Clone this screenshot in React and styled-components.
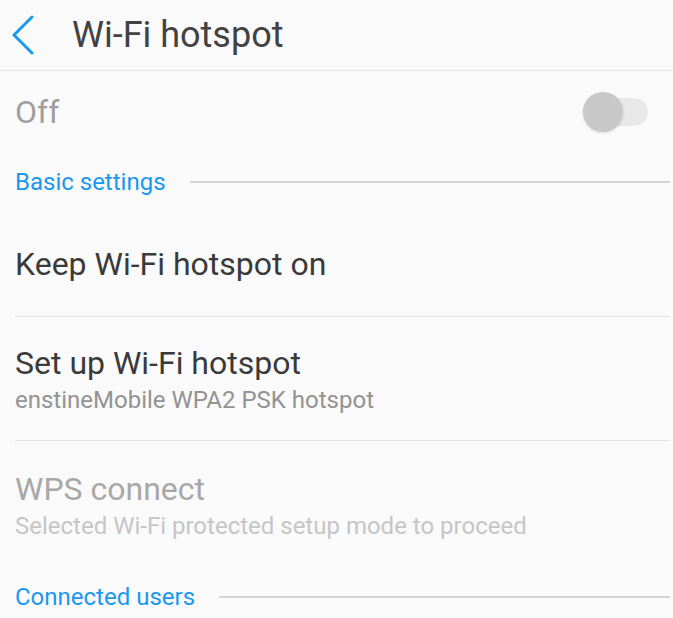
import React from 'react'
import styled, { createGlobalStyle } from 'styled-components'

const GlobalStyle = createGlobalStyle`
  html, body {
    margin: 0;
    padding: 0;
    background: #fafafa;
  }
  body {
    font-family: Roboto, "Noto Sans", "Liberation Sans", sans-serif;
    overflow: hidden;
  }
`;

const Screen = styled.div`
  width: 673px;
  height: 618px;
  background: #fafafa;
  display: flex;
  flex-direction: column;
  overflow: hidden;
`;

const Header = styled.header`
  height: 70px;
  flex-shrink: 0;
  display: flex;
  align-items: center;
  border-bottom: 1px solid #e4e4e4;
`;

const BackButton = styled.button`
  width: 72px;
  height: 70px;
  padding: 0 0 0 10px;
  border: none;
  background: none;
  display: flex;
  align-items: center;
`;

const Title = styled.h1`
  margin: 0;
  font-size: 36px;
  font-weight: 400;
  color: #424242;
`;

const ToggleRow = styled.div`
  height: 82px;
  flex-shrink: 0;
  display: flex;
  align-items: center;
  justify-content: space-between;
  padding: 0 25px 0 15px;
`;

const ToggleLabel = styled.span`
  font-size: 32px;
  color: #9e9e9e;
`;

const Switch = styled.div`
  position: relative;
  width: 65px;
  height: 28px;
  border-radius: 14px;
  background: #e8e8e8;
`;

const Thumb = styled.div`
  position: absolute;
  left: 0;
  top: -6px;
  width: 40px;
  height: 40px;
  border-radius: 50%;
  background: #c8c8c8;
  box-shadow: 0 1px 3px rgba(0, 0, 0, 0.12);
`;

const SectionHeader = styled.div`
  height: ${p => p.$height}px;
  flex-shrink: 0;
  display: flex;
  align-items: center;
  gap: 24px;
  padding: 0 3px 0 15px;
`;

const SectionTitle = styled.span`
  font-size: 24px;
  color: #1a98ef;
  white-space: nowrap;
`;

const SectionLine = styled.div`
  flex: 1;
  height: 2px;
  background: #d4d4d4;
`;

const Item = styled.div`
  height: ${p => p.$height}px;
  flex-shrink: 0;
  display: flex;
  flex-direction: column;
  justify-content: ${p => (p.$top ? 'flex-start' : 'center')};
  padding: ${p => p.$top || 0}px 15px 0;
  box-sizing: border-box;
`;

const ItemTitle = styled.div`
  font-size: 32px;
  line-height: 38px;
  color: ${p => (p.$disabled ? '#a8a8a8' : '#3a3a3a')};
`;

const ItemSub = styled.div`
  font-size: 24px;
  line-height: 37px;
  color: ${p => (p.$disabled ? '#c6c6c6' : '#939393')};
`;

const Divider = styled.div`
  height: 1px;
  flex-shrink: 0;
  margin: 0 3px 0 15px;
  background: #e2e2e2;
`;

const BackIcon = () => (
  <svg width="24" height="40" viewBox="0 0 24 40">
    <polyline
      points="22,2 4,20 22,38"
      fill="none"
      stroke="#1a98ef"
      strokeWidth="3"
      strokeLinecap="round"
      strokeLinejoin="round"
    />
  </svg>
)

export default function App() {
  return (
    <Screen>
      <GlobalStyle />
      <Header>
        <BackButton>
          <BackIcon />
        </BackButton>
        <Title>Wi-Fi hotspot</Title>
      </Header>
      <ToggleRow>
        <ToggleLabel>Off</ToggleLabel>
        <Switch>
          <Thumb />
        </Switch>
      </ToggleRow>
      <SectionHeader $height={58}>
        <SectionTitle>Basic settings</SectionTitle>
        <SectionLine />
      </SectionHeader>
      <Item $height={105}>
        <ItemTitle>Keep Wi-Fi hotspot on</ItemTitle>
      </Item>
      <Divider />
      <Item $height={123} $top={27}>
        <ItemTitle>Set up Wi-Fi hotspot</ItemTitle>
        <ItemSub>enstineMobile WPA2 PSK hotspot</ItemSub>
      </Item>
      <Divider />
      <Item $height={120} $top={29}>
        <ItemTitle $disabled>WPS connect</ItemTitle>
        <ItemSub $disabled>Selected Wi-Fi protected setup mode to proceed</ItemSub>
      </Item>
      <SectionHeader $height={72}>
        <SectionTitle>Connected users</SectionTitle>
        <SectionLine />
      </SectionHeader>
    </Screen>
  )
}
